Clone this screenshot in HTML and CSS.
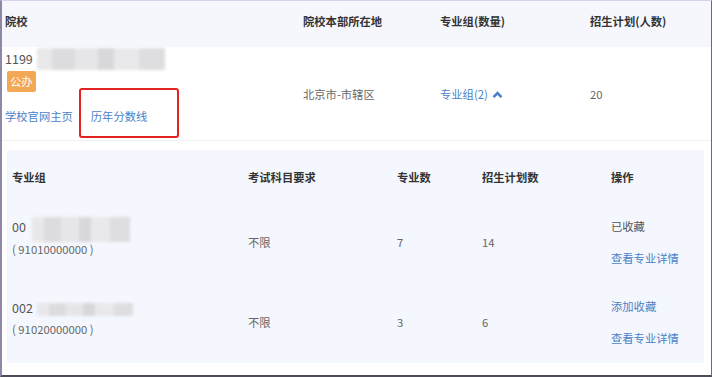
FILE: index.html
```html
<!DOCTYPE html>
<html>
<head>
    <title>院校专业组</title>
<link rel="stylesheet" href="styles.css">
</head>
<body>
    <div class="frame">
        <div class="row head">
            <div class="c1">院校</div>
            <div>院校本部所在地</div>
            <div>专业组(数量)</div>
            <div>招生计划(人数)</div>
        </div>

        <div class="row school">
            <div class="c1">
                <div class="name"><span>1199</span><i class="blur wide"></i></div>
                <span class="tag">公办</span>
                <div class="links">
                    <a>学校官网主页</a>
                    <a class="marked">历年分数线</a>
                </div>
            </div>
            <div class="txt">北京市-市辖区</div>
            <div><a>专业组(2)</a>
                <svg class="caret" width="11" height="8" viewBox="0 0 11 8"><path d="M1.5 6.2 L5.5 2.2 L9.5 6.2" fill="none" stroke="#4a7fc8" stroke-width="2.6"/></svg>
            </div>
            <div class="txt">20</div>
        </div>

        <div class="groups">
            <div class="grow ghead">
                <div>专业组</div>
                <div>考试科目要求</div>
                <div>专业数</div>
                <div>招生计划数</div>
                <div>操作</div>
            </div>
            <div class="grow">
                <div class="gname">
                    <div class="name"><span>00</span><i class="blur tall"></i></div>
                    <div class="code">( 91010000000 )</div>
                </div>
                <div>不限</div>
                <div>7</div>
                <div>14</div>
                <div class="ops">
                    <span class="done">已收藏</span>
                    <a>查看专业详情</a>
                </div>
            </div>
            <div class="grow">
                <div class="gname">
                    <div class="name"><span>002</span><i class="blur flat"></i></div>
                    <div class="code">( 91020000000 )</div>
                </div>
                <div>不限</div>
                <div>3</div>
                <div>6</div>
                <div class="ops">
                    <a>添加收藏</a>
                    <a>查看专业详情</a>
                </div>
            </div>
        </div>
    </div>
</body>
</html>
```

FILE: styles.css
```css
body {
    margin: 0;
    font-family: "Noto Sans CJK SC", "Liberation Sans", sans-serif;
    font-size: 11.3px;
    color: #666;
    background: #fff;
}

.frame {
    height: 377px;
    box-sizing: border-box;
    border-left: 2px solid #8e88a6;
    border-top: 1px solid #d8d3ea;
    border-right: 1px solid #6d6a78;
    border-bottom: 2px solid #4e4c58;
    overflow: hidden;
}

a {
    color: #4a7fc8;
}

.row {
    display: grid;
    grid-template-columns: 298px 137px 150px 1fr;
    padding-left: 3px;
}

.head {
    height: 46px;
    padding-top: 12px;
    box-sizing: border-box;
    background: #f5f7fd;
    font-weight: bold;
    color: #333;
}

.school {
    height: 93px;
    border-bottom: 1px solid #eef0f4;
    align-items: center;
}

.school .c1 {
    align-self: start;
}

.name {
    display: flex;
    align-items: center;
    font-size: 12.5px;
    color: #555;
}

.school .name {
    height: 23px;
}

.blur {
    display: block;
    filter: blur(1.5px);
    background:
        linear-gradient(90deg, #e8e8ea 0 12%, #dcdcde 12% 30%, #e6e6e8 30% 48%, #d8d8da 48% 60%, #e9e9eb 60% 80%, #dedee0 80%);
}

.blur.wide {
    width: 128px;
    height: 22px;
    margin-left: 4px;
}

.blur.tall {
    width: 98px;
    height: 25px;
    margin-left: 6px;
}

.blur.flat {
    width: 96px;
    height: 13px;
    margin-left: 4px;
}

.tag {
    display: inline-block;
    margin: 1px 0 0 2px;
    padding: 0 3px;
    height: 21px;
    line-height: 21px;
    background: #f2a854;
    color: #fff;
    border-radius: 2px;
}

.links {
    display: flex;
    margin-top: 16px;
}

.links a {
    margin-right: 18px;
}

.links .marked {
    position: relative;
}

.links .marked::after {
    content: "";
    position: absolute;
    left: -12px;
    top: -20px;
    width: 96px;
    height: 46px;
    border: 2px solid #e2231f;
    border-radius: 3px;
}

.caret {
    margin-left: 2px;
}

.groups {
    margin: 9px 7px 0 5px;
    height: 213px;
    background: #f4f7fd;
}

.grow {
    display: grid;
    grid-template-columns: 236px 149px 85px 129px 1fr;
    padding-left: 5px;
    height: 80px;
    align-items: center;
}

.ghead {
    height: 52px;
    font-weight: bold;
    color: #333;
    align-items: start;
    padding-top: 19px;
    box-sizing: border-box;
}

.gname {
    margin-bottom: 10px;
}

.gname .name {
    height: 26px;
}

.gname .name span {
    margin-top: -5px;
}

.grow:last-child .gname .name span {
    margin-top: -3px;
}

.code {
    margin-top: -2px;
    line-height: 18px;
}

.ops {
    display: flex;
    flex-direction: column;
    gap: 16px;
}

.done {
    color: #555;
}
```
